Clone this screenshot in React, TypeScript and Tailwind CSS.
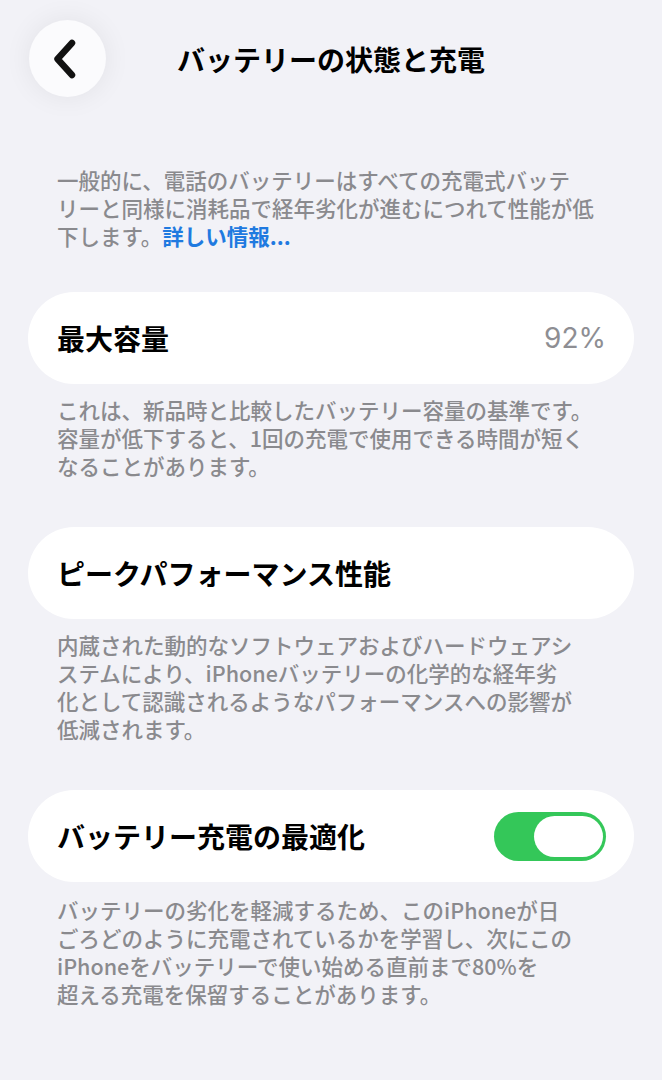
import React from "react";

const font = { fontFamily: '"Noto Sans CJK JP", "Noto Sans", sans-serif' };

function Note({ children, className = "" }: { children: React.ReactNode; className?: string }) {
  return (
    <p className={`px-[57px] text-[21.5px] leading-[28px] font-medium text-[#8a8a8e] whitespace-nowrap ${className}`}>
      {children}
    </p>
  );
}

function Card({ children, className = "" }: { children: React.ReactNode; className?: string }) {
  return (
    <div
      className={`mx-[28px] h-[92px] rounded-full bg-white flex items-center justify-between pl-[29px] pr-[28px] ${className}`}
    >
      {children}
    </div>
  );
}

function Toggle() {
  return (
    <div className="w-[112px] h-[49px] rounded-full bg-[#34c759] flex items-center justify-end py-[4px] pr-[3px]">
      <div className="w-[69px] h-[41px] rounded-full bg-white" />
    </div>
  );
}

export default function App() {
  return (
    <main className="min-h-[1080px] w-full bg-[#f2f2f7] text-black pb-10" style={font}>
      <header className="pt-[20px] grid grid-cols-[1fr_auto_1fr] items-center">
        <div className="pl-[29px]">
          <button className="w-[77px] h-[77px] rounded-full bg-[#fbfbfd] shadow-[0_0_28px_rgba(0,0,0,0.07)] flex items-center justify-center">
            <svg width="28" height="40" viewBox="0 0 28 40" className="-ml-[6px]">
              <path
                d="M21 4 L6.5 20 L21 36"
                fill="none"
                stroke="#111"
                strokeWidth="6.5"
                strokeLinecap="round"
                strokeLinejoin="round"
              />
            </svg>
          </button>
        </div>
        <h1 className="text-[28px] font-bold leading-none whitespace-nowrap">バッテリーの状態と充電</h1>
        <div />
      </header>

      <Note className="mt-[69px]">
        一般的に、電話のバッテリーはすべての充電式バッテ
        <br />
        リーと同様に消耗品で経年劣化が進むにつれて性能が低
        <br />
        下します。<span className="text-[#1f7ae0] font-bold">詳しい情報...</span>
      </Note>

      <Card className="mt-[42px]">
        <span className="text-[28px] font-bold">最大容量</span>
        <span className="text-[28px] text-[#8e8e93]" style={{ fontFamily: '"Inter", "Noto Sans", sans-serif' }}>
          92%
        </span>
      </Card>

      <Note className="mt-[12px]">
        これは、新品時と比較したバッテリー容量の基準です。
        <br />
        容量が低下すると、1回の充電で使用できる時間が短く
        <br />
        なることがあります。
      </Note>

      <Card className="mt-[47px]">
        <span className="text-[28px] font-bold">ピークパフォーマンス性能</span>
      </Card>

      <Note className="mt-[12px]">
        内蔵された動的なソフトウェアおよびハードウェアシ
        <br />
        ステムにより、iPhoneバッテリーの化学的な経年劣
        <br />
        化として認識されるようなパフォーマンスへの影響が
        <br />
        低減されます。
      </Note>

      <Card className="mt-[47px]">
        <span className="text-[28px] font-bold">バッテリー充電の最適化</span>
        <Toggle />
      </Card>

      <Note className="mt-[14px]">
        バッテリーの劣化を軽減するため、このiPhoneが日
        <br />
        ごろどのように充電されているかを学習し、次にこの
        <br />
        iPhoneをバッテリーで使い始める直前まで80%を
        <br />
        超える充電を保留することがあります。
      </Note>
    </main>
  );
}
